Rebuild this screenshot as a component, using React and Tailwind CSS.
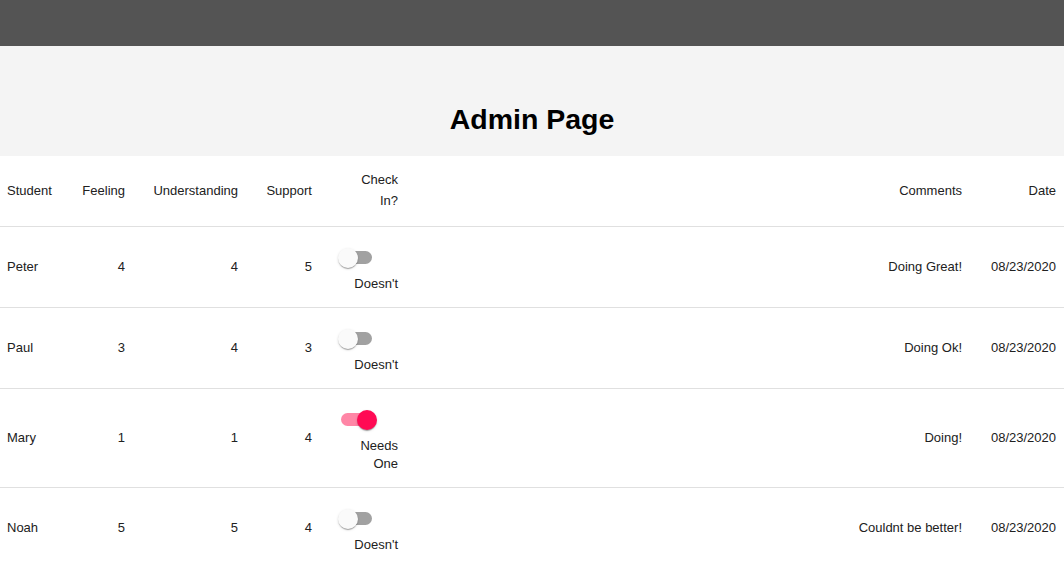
import React from "react";

const rows = [
  { name: "Peter", feeling: 4, understanding: 4, support: 5, on: false, comment: "Doing Great!" },
  { name: "Paul", feeling: 3, understanding: 4, support: 3, on: false, comment: "Doing Ok!" },
  { name: "Mary", feeling: 1, understanding: 1, support: 4, on: true, comment: "Doing!" },
  { name: "Noah", feeling: 5, understanding: 5, support: 4, on: false, comment: "Couldnt be better!" },
];

function Toggle({ on }) {
  return (
    <div className="relative w-[58px] h-[36px]">
      <div
        className={
          "absolute left-[12px] top-[12px] w-[31px] h-[13px] rounded-full " +
          (on ? "bg-[#ff86a6]" : "bg-[#a1a1a1]")
        }
      />
      <div
        className={
          "absolute top-[9px] w-[20px] h-[20px] rounded-full " +
          (on
            ? "left-[28px] bg-[#ff0a54] shadow-[0_2px_1px_-1px_rgba(0,0,0,0.2),0_1px_1px_0_rgba(0,0,0,0.14),0_1px_3px_0_rgba(0,0,0,0.12)]"
            : "left-[9px] bg-[#fafafa] shadow-[0_2px_1px_-1px_rgba(0,0,0,0.2),0_1px_1px_0_rgba(0,0,0,0.14),0_1px_3px_0_rgba(0,0,0,0.12)]")
        }
      />
    </div>
  );
}

export default function App() {
  return (
    <div className="w-[1064px] min-h-[563px] bg-white font-['Liberation_Sans',Arial,sans-serif] text-[#212121]">
      <div className="h-[46px] bg-[#545454]" />
      <div className="bg-[#f4f4f4] pt-[56px] pb-[20px]">
        <h1 className="text-center text-[28.5px] leading-[34px] font-bold text-black">Admin Page</h1>
      </div>
      <table className="w-full table-fixed border-collapse text-[13px]">
        <colgroup>
          <col className="w-[66px]" />
          <col className="w-[67px]" />
          <col className="w-[113px]" />
          <col className="w-[74px]" />
          <col className="w-[86px]" />
          <col className="w-[564px]" />
          <col className="w-[94px]" />
        </colgroup>
        <thead>
          <tr className="border-b border-[#e0e0e0] leading-[21px]">
            <th className="pl-[7px] pr-2 pt-[13px] pb-[15px] text-left font-normal">Student</th>
            <th className="px-2 pt-[13px] pb-[15px] text-right font-normal">Feeling</th>
            <th className="px-2 pt-[13px] pb-[15px] text-right font-normal">Understanding</th>
            <th className="px-2 pt-[13px] pb-[15px] text-right font-normal">Support</th>
            <th className="px-2 pt-[13px] pb-[15px] text-right font-normal">
              <div className="ml-auto w-[46px]">Check In?</div>
            </th>
            <th className="px-2 pt-[13px] pb-[15px] text-right font-normal">Comments</th>
            <th className="px-2 pt-[13px] pb-[15px] text-right font-normal">Date</th>
          </tr>
        </thead>
        <tbody>
          {rows.map((r) => (
            <tr key={r.name} className="border-b border-[#e0e0e0] leading-[18px]">
              <td className="pl-[7px] pr-2 py-[13px] text-left align-middle">{r.name}</td>
              <td className="px-2 py-[13px] text-right align-middle">{r.feeling}</td>
              <td className="px-2 py-[13px] text-right align-middle">{r.understanding}</td>
              <td className="px-2 py-[13px] text-right align-middle">{r.support}</td>
              <td className="px-2 pt-3 pb-[14px] align-middle">
                <div className="flex flex-col">
                  <div className="ml-[1px]">
                    <Toggle on={r.on} />
                  </div>
                  <div className="ml-auto w-[46px] text-right">{r.on ? "Needs One" : "Doesn't"}</div>
                </div>
              </td>
              <td className="px-2 py-[13px] text-right align-middle">{r.comment}</td>
              <td className="px-2 py-[13px] text-right align-middle">08/23/2020</td>
            </tr>
          ))}
        </tbody>
      </table>
    </div>
  );
}
